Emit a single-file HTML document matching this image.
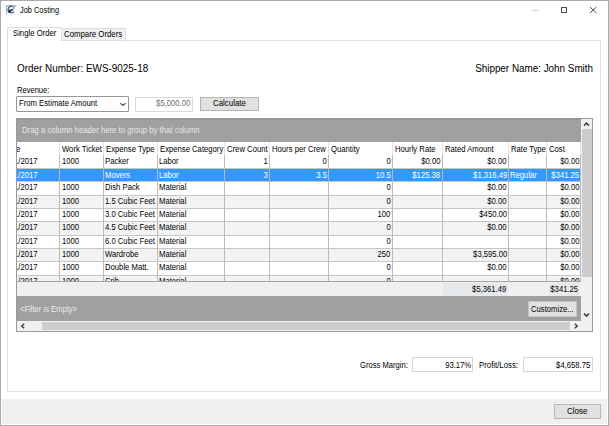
<!DOCTYPE html>
<html><head><meta charset="utf-8"><style>
html,body{margin:0;padding:0;width:609px;height:426px;overflow:hidden;background:#fff;}
body{position:relative;font-family:"Liberation Sans",sans-serif;}
.b{position:absolute;}
.t{position:absolute;white-space:nowrap;line-height:1;}
</style></head><body>
<div class="b" style="left:0px;top:0px;width:609px;height:426px;background:#fff;"></div>
<div class="b" style="left:0px;top:0px;width:609px;height:426px;border:1px solid #ababab;box-sizing:border-box;"></div>
<svg class="b" style="left:3px;top:2px" width="16" height="16" viewBox="3 2 16 16">
<rect x="6.6" y="5.5" width="9.4" height="0.9" fill="#5d739b"/>
<rect x="6.1" y="5.8" width="0.9" height="8.6" fill="#8ea0c0"/>
<path d="M12.6 6.6 A3.2 3.2 0 1 0 13.8 11.6" stroke="#3d5b8c" stroke-width="1.3" fill="none"/>
<path d="M13.2 7.2 L14.4 8.6" stroke="#5b74a0" stroke-width="1.1"/>
<path d="M8.6 11.6 Q10.5 12.6 9.8 10.6 L13.2 9.6" stroke="#0f2c5e" stroke-width="1.6" fill="none"/>
<circle cx="9.6" cy="11.4" r="1.3" fill="#16335f"/>
</svg>
<div class="t" style="left:19.50px;top:6.48px;font-size:8.29px;color:#000;transform:scaleX(0.8929);transform-origin:0 0;">Job Costing</div>
<div class="b" style="left:532px;top:10px;width:7px;height:1px;background:#d4d4d4;"></div>
<div class="b" style="left:560.5px;top:7px;width:6.7999999999999545px;height:6.199999999999999px;border:1px solid #4a4a4a;border-radius:0.6px;box-sizing:border-box;"></div>
<svg class="b" style="left:589px;top:6px" width="9" height="9" viewBox="589 6 9 9">
<path d="M590.1 7.0 L596.3 13.0 M596.3 7.0 L590.1 13.0" stroke="#3a3a3a" stroke-width="0.95"/></svg>
<div class="b" style="left:7px;top:40.4px;width:593.5px;height:352.1px;border:1px solid #e0e0e0;box-sizing:border-box;background:#fff;"></div>
<div class="b" style="left:61px;top:28.2px;width:64.6px;height:12.8px;border:1px solid #dedede;box-sizing:border-box;background:#f0f0f0;"></div>
<div class="b" style="left:7px;top:26.8px;width:54.5px;height:14.7px;border:1px solid #dedede;border-bottom:none;box-sizing:border-box;background:#fff;"></div>
<div class="t" style="left:12.60px;top:28.67px;font-size:8.66px;color:#000;transform:scaleX(0.8929);transform-origin:0 0;">Single Order</div>
<div class="t" style="left:64.00px;top:30.19px;font-size:8.76px;color:#000;transform:scaleX(0.8929);transform-origin:0 0;">Compare Orders</div>
<div class="t" style="left:16.60px;top:62.79px;font-size:11.12px;color:#000;transform:scaleX(0.8929);transform-origin:0 0;">Order Number: EWS-9025-18</div>
<div class="t" style="right:16.20px;top:62.84px;font-size:11.05px;color:#000;transform:scaleX(0.8929);transform-origin:100% 0;">Shipper Name: John Smith</div>
<div class="t" style="left:16.60px;top:85.92px;font-size:8.48px;color:#000;transform:scaleX(0.8929);transform-origin:0 0;">Revenue:</div>
<div class="b" style="left:16.3px;top:96.3px;width:112.7px;height:15.700000000000003px;border:1px solid #969696;border-radius:1px;box-sizing:border-box;background:#fff;"></div>
<div class="t" style="left:18.60px;top:99.00px;font-size:8.62px;color:#000;transform:scaleX(0.8929);transform-origin:0 0;">From Estimate Amount</div>
<svg class="b" style="left:119px;top:101px" width="7" height="5" viewBox="0 0 7 5">
<path d="M1.2 2.1 L3.9 4.5 L6.6 2.1" stroke="#505050" stroke-width="1.25" fill="none"/></svg>
<div class="b" style="left:135px;top:96.5px;width:58px;height:15.5px;border:1px solid #d9d9d9;box-sizing:border-box;background:#fff;"></div>
<div class="t" style="right:418.90px;top:99.10px;font-size:8.62px;color:#6d6d6d;transform:scaleX(0.8929);transform-origin:100% 0;">$5,000.00</div>
<div class="b" style="left:199.5px;top:97px;width:59.80000000000001px;height:14px;border:1px solid #b4b4b4;box-sizing:border-box;background:#e1e1e1;"></div>
<div class="t" style="left:212.80px;top:99.42px;font-size:8.84px;color:#000;transform:scaleX(0.8929);transform-origin:0 0;">Calculate</div>
<div class="b" style="left:16.3px;top:118px;width:576.2px;height:214px;background:#fff;"></div>
<div class="b" style="left:17px;top:118.5px;width:564px;height:23.19999999999999px;background:#a0a0a0;border-top:1px solid #929599;box-sizing:border-box;"></div>
<div class="t" style="left:22.20px;top:125.83px;font-size:8.70px;color:#e8e8e8;transform:scaleX(0.8929);transform-origin:0 0;">Drag a column header here to group by that column</div>
<div class="b" style="left:17px;top:155.2px;width:564px;height:126.10px;overflow:hidden;">
<div class="b" style="left:0;top:0.00px;width:563.5px;height:13.83px;background:#fff;"></div>
<div class="b" style="left:0;top:13.33px;width:563.5px;height:13.83px;background:#3399ff;"></div>
<div class="b" style="left:0;top:26.66px;width:563.5px;height:13.83px;background:#fff;"></div>
<div class="b" style="left:0;top:39.99px;width:563.5px;height:13.83px;background:#f3f3f3;"></div>
<div class="b" style="left:0;top:53.32px;width:563.5px;height:13.83px;background:#fff;"></div>
<div class="b" style="left:0;top:66.65px;width:563.5px;height:13.83px;background:#f3f3f3;"></div>
<div class="b" style="left:0;top:79.98px;width:563.5px;height:13.83px;background:#fff;"></div>
<div class="b" style="left:0;top:93.31px;width:563.5px;height:13.83px;background:#f3f3f3;"></div>
<div class="b" style="left:0;top:106.64px;width:563.5px;height:13.83px;background:#fff;"></div>
<div class="b" style="left:0;top:119.97px;width:563.5px;height:13.83px;background:#f3f3f3;"></div>
<div class="b" style="left:0;top:12.83px;width:563.5px;height:1px;background:#c6c6c6;"></div>
<div class="b" style="left:0;top:26.16px;width:563.5px;height:1px;background:#c6c6c6;"></div>
<div class="b" style="left:0;top:39.49px;width:563.5px;height:1px;background:#c6c6c6;"></div>
<div class="b" style="left:0;top:52.82px;width:563.5px;height:1px;background:#c6c6c6;"></div>
<div class="b" style="left:0;top:66.15px;width:563.5px;height:1px;background:#c6c6c6;"></div>
<div class="b" style="left:0;top:79.48px;width:563.5px;height:1px;background:#c6c6c6;"></div>
<div class="b" style="left:0;top:92.81px;width:563.5px;height:1px;background:#c6c6c6;"></div>
<div class="b" style="left:0;top:106.14px;width:563.5px;height:1px;background:#c6c6c6;"></div>
<div class="b" style="left:0;top:119.47px;width:563.5px;height:1px;background:#c6c6c6;"></div>
<div class="b" style="left:0;top:132.80px;width:563.5px;height:1px;background:#c6c6c6;"></div>
<div class="t" style="right:543.60px;top:1.60px;font-size:8.62px;color:#000;transform:scaleX(0.8929);transform-origin:100% 0;">1/1/2017</div>
<div class="t" style="left:45.00px;top:1.60px;font-size:8.62px;color:#000;transform:scaleX(0.8929);transform-origin:0 0;">1000</div>
<div class="t" style="left:88.10px;top:1.60px;font-size:8.62px;color:#000;transform:scaleX(0.8929);transform-origin:0 0;">Packer</div>
<div class="t" style="left:142.20px;top:1.60px;font-size:8.62px;color:#000;transform:scaleX(0.8929);transform-origin:0 0;">Labor</div>
<div class="t" style="right:313.40px;top:1.60px;font-size:8.62px;color:#000;transform:scaleX(0.8929);transform-origin:100% 0;">1</div>
<div class="t" style="right:254.10px;top:1.60px;font-size:8.62px;color:#000;transform:scaleX(0.8929);transform-origin:100% 0;">0</div>
<div class="t" style="right:190.30px;top:1.60px;font-size:8.62px;color:#000;transform:scaleX(0.8929);transform-origin:100% 0;">0</div>
<div class="t" style="right:140.60px;top:1.60px;font-size:8.62px;color:#000;transform:scaleX(0.8929);transform-origin:100% 0;">$0.00</div>
<div class="t" style="right:74.10px;top:1.60px;font-size:8.62px;color:#000;transform:scaleX(0.8929);transform-origin:100% 0;">$0.00</div>
<div class="t" style="right:1.50px;top:1.60px;font-size:8.62px;color:#000;transform:scaleX(0.8929);transform-origin:100% 0;">$0.00</div>
<div class="t" style="right:543.60px;top:15.63px;font-size:8.62px;color:#fff;transform:scaleX(0.8929);transform-origin:100% 0;">1/1/2017</div>
<div class="t" style="left:88.10px;top:15.63px;font-size:8.62px;color:#fff;transform:scaleX(0.8929);transform-origin:0 0;">Movers</div>
<div class="t" style="left:142.20px;top:15.63px;font-size:8.62px;color:#fff;transform:scaleX(0.8929);transform-origin:0 0;">Labor</div>
<div class="t" style="right:313.40px;top:15.63px;font-size:8.62px;color:#fff;transform:scaleX(0.8929);transform-origin:100% 0;">3</div>
<div class="t" style="right:254.10px;top:15.63px;font-size:8.62px;color:#fff;transform:scaleX(0.8929);transform-origin:100% 0;">3.5</div>
<div class="t" style="right:190.30px;top:15.63px;font-size:8.62px;color:#fff;transform:scaleX(0.8929);transform-origin:100% 0;">10.5</div>
<div class="t" style="right:140.60px;top:15.63px;font-size:8.62px;color:#fff;transform:scaleX(0.8929);transform-origin:100% 0;">$125.38</div>
<div class="t" style="right:74.10px;top:15.63px;font-size:8.62px;color:#fff;transform:scaleX(0.8929);transform-origin:100% 0;">$1,316.49</div>
<div class="t" style="left:492.80px;top:15.63px;font-size:8.62px;color:#fff;transform:scaleX(0.8929);transform-origin:0 0;">Regular</div>
<div class="t" style="right:1.50px;top:15.63px;font-size:8.62px;color:#fff;transform:scaleX(0.8929);transform-origin:100% 0;">$341.25</div>
<div class="t" style="right:543.60px;top:28.26px;font-size:8.62px;color:#000;transform:scaleX(0.8929);transform-origin:100% 0;">1/1/2017</div>
<div class="t" style="left:45.00px;top:28.26px;font-size:8.62px;color:#000;transform:scaleX(0.8929);transform-origin:0 0;">1000</div>
<div class="t" style="left:88.10px;top:28.26px;font-size:8.62px;color:#000;transform:scaleX(0.8929);transform-origin:0 0;">Dish Pack</div>
<div class="t" style="left:142.20px;top:28.26px;font-size:8.62px;color:#000;transform:scaleX(0.8929);transform-origin:0 0;">Material</div>
<div class="t" style="right:190.30px;top:28.26px;font-size:8.62px;color:#000;transform:scaleX(0.8929);transform-origin:100% 0;">0</div>
<div class="t" style="right:74.10px;top:28.26px;font-size:8.62px;color:#000;transform:scaleX(0.8929);transform-origin:100% 0;">$0.00</div>
<div class="t" style="right:1.50px;top:28.26px;font-size:8.62px;color:#000;transform:scaleX(0.8929);transform-origin:100% 0;">$0.00</div>
<div class="t" style="right:543.60px;top:41.59px;font-size:8.62px;color:#000;transform:scaleX(0.8929);transform-origin:100% 0;">1/1/2017</div>
<div class="t" style="left:45.00px;top:41.59px;font-size:8.62px;color:#000;transform:scaleX(0.8929);transform-origin:0 0;">1000</div>
<div class="t" style="left:88.10px;top:41.59px;font-size:8.62px;color:#000;transform:scaleX(0.8929);transform-origin:0 0;">1.5 Cubic Feet</div>
<div class="t" style="left:142.20px;top:41.59px;font-size:8.62px;color:#000;transform:scaleX(0.8929);transform-origin:0 0;">Material</div>
<div class="t" style="right:190.30px;top:41.59px;font-size:8.62px;color:#000;transform:scaleX(0.8929);transform-origin:100% 0;">0</div>
<div class="t" style="right:74.10px;top:41.59px;font-size:8.62px;color:#000;transform:scaleX(0.8929);transform-origin:100% 0;">$0.00</div>
<div class="t" style="right:1.50px;top:41.59px;font-size:8.62px;color:#000;transform:scaleX(0.8929);transform-origin:100% 0;">$0.00</div>
<div class="t" style="right:543.60px;top:54.92px;font-size:8.62px;color:#000;transform:scaleX(0.8929);transform-origin:100% 0;">1/1/2017</div>
<div class="t" style="left:45.00px;top:54.92px;font-size:8.62px;color:#000;transform:scaleX(0.8929);transform-origin:0 0;">1000</div>
<div class="t" style="left:88.10px;top:54.92px;font-size:8.62px;color:#000;transform:scaleX(0.8929);transform-origin:0 0;">3.0 Cubic Feet</div>
<div class="t" style="left:142.20px;top:54.92px;font-size:8.62px;color:#000;transform:scaleX(0.8929);transform-origin:0 0;">Material</div>
<div class="t" style="right:190.30px;top:54.92px;font-size:8.62px;color:#000;transform:scaleX(0.8929);transform-origin:100% 0;">100</div>
<div class="t" style="right:74.10px;top:54.92px;font-size:8.62px;color:#000;transform:scaleX(0.8929);transform-origin:100% 0;">$450.00</div>
<div class="t" style="right:1.50px;top:54.92px;font-size:8.62px;color:#000;transform:scaleX(0.8929);transform-origin:100% 0;">$0.00</div>
<div class="t" style="right:543.60px;top:68.25px;font-size:8.62px;color:#000;transform:scaleX(0.8929);transform-origin:100% 0;">1/1/2017</div>
<div class="t" style="left:45.00px;top:68.25px;font-size:8.62px;color:#000;transform:scaleX(0.8929);transform-origin:0 0;">1000</div>
<div class="t" style="left:88.10px;top:68.25px;font-size:8.62px;color:#000;transform:scaleX(0.8929);transform-origin:0 0;">4.5 Cubic Feet</div>
<div class="t" style="left:142.20px;top:68.25px;font-size:8.62px;color:#000;transform:scaleX(0.8929);transform-origin:0 0;">Material</div>
<div class="t" style="right:190.30px;top:68.25px;font-size:8.62px;color:#000;transform:scaleX(0.8929);transform-origin:100% 0;">0</div>
<div class="t" style="right:74.10px;top:68.25px;font-size:8.62px;color:#000;transform:scaleX(0.8929);transform-origin:100% 0;">$0.00</div>
<div class="t" style="right:1.50px;top:68.25px;font-size:8.62px;color:#000;transform:scaleX(0.8929);transform-origin:100% 0;">$0.00</div>
<div class="t" style="right:543.60px;top:81.58px;font-size:8.62px;color:#000;transform:scaleX(0.8929);transform-origin:100% 0;">1/1/2017</div>
<div class="t" style="left:45.00px;top:81.58px;font-size:8.62px;color:#000;transform:scaleX(0.8929);transform-origin:0 0;">1000</div>
<div class="t" style="left:88.10px;top:81.58px;font-size:8.62px;color:#000;transform:scaleX(0.8929);transform-origin:0 0;">6.0 Cubic Feet</div>
<div class="t" style="left:142.20px;top:81.58px;font-size:8.62px;color:#000;transform:scaleX(0.8929);transform-origin:0 0;">Material</div>
<div class="t" style="right:190.30px;top:81.58px;font-size:8.62px;color:#000;transform:scaleX(0.8929);transform-origin:100% 0;">0</div>
<div class="t" style="right:1.50px;top:81.58px;font-size:8.62px;color:#000;transform:scaleX(0.8929);transform-origin:100% 0;">$0.00</div>
<div class="t" style="right:543.60px;top:94.91px;font-size:8.62px;color:#000;transform:scaleX(0.8929);transform-origin:100% 0;">1/1/2017</div>
<div class="t" style="left:45.00px;top:94.91px;font-size:8.62px;color:#000;transform:scaleX(0.8929);transform-origin:0 0;">1000</div>
<div class="t" style="left:88.10px;top:94.91px;font-size:8.62px;color:#000;transform:scaleX(0.8929);transform-origin:0 0;">Wardrobe</div>
<div class="t" style="left:142.20px;top:94.91px;font-size:8.62px;color:#000;transform:scaleX(0.8929);transform-origin:0 0;">Material</div>
<div class="t" style="right:190.30px;top:94.91px;font-size:8.62px;color:#000;transform:scaleX(0.8929);transform-origin:100% 0;">250</div>
<div class="t" style="right:74.10px;top:94.91px;font-size:8.62px;color:#000;transform:scaleX(0.8929);transform-origin:100% 0;">$3,595.00</div>
<div class="t" style="right:1.50px;top:94.91px;font-size:8.62px;color:#000;transform:scaleX(0.8929);transform-origin:100% 0;">$0.00</div>
<div class="t" style="right:543.60px;top:108.24px;font-size:8.62px;color:#000;transform:scaleX(0.8929);transform-origin:100% 0;">1/1/2017</div>
<div class="t" style="left:45.00px;top:108.24px;font-size:8.62px;color:#000;transform:scaleX(0.8929);transform-origin:0 0;">1000</div>
<div class="t" style="left:88.10px;top:108.24px;font-size:8.62px;color:#000;transform:scaleX(0.8929);transform-origin:0 0;">Double Matt.</div>
<div class="t" style="left:142.20px;top:108.24px;font-size:8.62px;color:#000;transform:scaleX(0.8929);transform-origin:0 0;">Material</div>
<div class="t" style="right:190.30px;top:108.24px;font-size:8.62px;color:#000;transform:scaleX(0.8929);transform-origin:100% 0;">0</div>
<div class="t" style="right:74.10px;top:108.24px;font-size:8.62px;color:#000;transform:scaleX(0.8929);transform-origin:100% 0;">$0.00</div>
<div class="t" style="right:1.50px;top:108.24px;font-size:8.62px;color:#000;transform:scaleX(0.8929);transform-origin:100% 0;">$0.00</div>
<div class="t" style="right:543.60px;top:121.57px;font-size:8.62px;color:#000;transform:scaleX(0.8929);transform-origin:100% 0;">1/1/2017</div>
<div class="t" style="left:45.00px;top:121.57px;font-size:8.62px;color:#000;transform:scaleX(0.8929);transform-origin:0 0;">1000</div>
<div class="t" style="left:88.10px;top:121.57px;font-size:8.62px;color:#000;transform:scaleX(0.8929);transform-origin:0 0;">Crib</div>
<div class="t" style="left:142.20px;top:121.57px;font-size:8.62px;color:#000;transform:scaleX(0.8929);transform-origin:0 0;">Material</div>
<div class="t" style="right:190.30px;top:121.57px;font-size:8.62px;color:#000;transform:scaleX(0.8929);transform-origin:100% 0;">0</div>
<div class="t" style="right:1.50px;top:121.57px;font-size:8.62px;color:#000;transform:scaleX(0.8929);transform-origin:100% 0;">$0.00</div>
<div class="b" style="left:42.00px;top:0;width:1px;height:126.10px;background:#bababa;"></div>
<div class="b" style="left:85.90px;top:0;width:1px;height:126.10px;background:#bababa;"></div>
<div class="b" style="left:140.00px;top:0;width:1px;height:126.10px;background:#bababa;"></div>
<div class="b" style="left:207.10px;top:0;width:1px;height:126.10px;background:#bababa;"></div>
<div class="b" style="left:251.70px;top:0;width:1px;height:126.10px;background:#bababa;"></div>
<div class="b" style="left:311.00px;top:0;width:1px;height:126.10px;background:#bababa;"></div>
<div class="b" style="left:374.80px;top:0;width:1px;height:126.10px;background:#bababa;"></div>
<div class="b" style="left:424.50px;top:0;width:1px;height:126.10px;background:#bababa;"></div>
<div class="b" style="left:491.00px;top:0;width:1px;height:126.10px;background:#bababa;"></div>
<div class="b" style="left:528.90px;top:0;width:1px;height:126.10px;background:#bababa;"></div>
<div class="b" style="left:563.00px;top:0;width:1px;height:126.10px;background:#bababa;"></div>
</div>
<div class="b" style="left:17px;top:141.7px;width:564px;height:13.50px;overflow:hidden;background:#fff">
<div class="t" style="right:561.20px;top:2.90px;font-size:8.62px;color:#000;transform:scaleX(0.8929);transform-origin:100% 0;">Date</div>
<div class="t" style="left:45.00px;top:2.90px;font-size:8.62px;color:#000;transform:scaleX(0.8929);transform-origin:0 0;">Work Ticket</div>
<div class="t" style="left:88.90px;top:2.90px;font-size:8.62px;color:#000;transform:scaleX(0.8929);transform-origin:0 0;">Expense Type</div>
<div class="t" style="left:143.00px;top:2.90px;font-size:8.62px;color:#000;transform:scaleX(0.8929);transform-origin:0 0;">Expense Category</div>
<div class="t" style="left:210.10px;top:2.90px;font-size:8.62px;color:#000;transform:scaleX(0.8929);transform-origin:0 0;">Crew Count</div>
<div class="t" style="left:254.70px;top:2.90px;font-size:8.62px;color:#000;transform:scaleX(0.8929);transform-origin:0 0;">Hours per Crew</div>
<div class="t" style="left:314.00px;top:2.90px;font-size:8.62px;color:#000;transform:scaleX(0.8929);transform-origin:0 0;">Quantity</div>
<div class="t" style="left:377.80px;top:2.90px;font-size:8.62px;color:#000;transform:scaleX(0.8929);transform-origin:0 0;">Hourly Rate</div>
<div class="t" style="left:427.50px;top:2.90px;font-size:8.62px;color:#000;transform:scaleX(0.8929);transform-origin:0 0;">Rated Amount</div>
<div class="t" style="left:494.00px;top:2.90px;font-size:8.62px;color:#000;transform:scaleX(0.8929);transform-origin:0 0;">Rate Type</div>
<div class="t" style="left:531.90px;top:2.90px;font-size:8.62px;color:#000;transform:scaleX(0.8929);transform-origin:0 0;">Cost</div>
<div class="b" style="left:42.00px;top:0;width:1px;height:13.50px;background:#e3e3e3;"></div>
<div class="b" style="left:85.90px;top:0;width:1px;height:13.50px;background:#e3e3e3;"></div>
<div class="b" style="left:140.00px;top:0;width:1px;height:13.50px;background:#e3e3e3;"></div>
<div class="b" style="left:207.10px;top:0;width:1px;height:13.50px;background:#e3e3e3;"></div>
<div class="b" style="left:251.70px;top:0;width:1px;height:13.50px;background:#e3e3e3;"></div>
<div class="b" style="left:311.00px;top:0;width:1px;height:13.50px;background:#e3e3e3;"></div>
<div class="b" style="left:374.80px;top:0;width:1px;height:13.50px;background:#e3e3e3;"></div>
<div class="b" style="left:424.50px;top:0;width:1px;height:13.50px;background:#e3e3e3;"></div>
<div class="b" style="left:491.00px;top:0;width:1px;height:13.50px;background:#e3e3e3;"></div>
<div class="b" style="left:528.90px;top:0;width:1px;height:13.50px;background:#e3e3e3;"></div>
<div class="b" style="left:563.00px;top:0;width:1px;height:13.50px;background:#e3e3e3;"></div>
</div>
<div class="b" style="left:17px;top:281px;width:564px;height:15.600000000000023px;background:#f0f0f0;border-top:1px solid #a4a4a4;box-sizing:border-box;"></div>
<div class="b" style="left:443.3px;top:282.8px;width:64.39999999999998px;height:12.800000000000011px;background:#e6e9ec;"></div>
<div class="b" style="left:547.6px;top:282.8px;width:32.39999999999998px;height:12.800000000000011px;background:#e9e9e9;"></div>
<div class="t" style="right:103.20px;top:284.90px;font-size:8.62px;color:#000;transform:scaleX(0.8929);transform-origin:100% 0;">$5,361.49</div>
<div class="t" style="right:30.70px;top:284.90px;font-size:8.62px;color:#000;transform:scaleX(0.8929);transform-origin:100% 0;">$341.25</div>
<div class="b" style="left:17px;top:296.4px;width:564px;height:24.200000000000045px;background:#a0a0a0;"></div>
<div class="t" style="left:20.40px;top:304.98px;font-size:8.53px;color:#eaeaea;transform:scaleX(0.8929);transform-origin:0 0;">&lt;Filter is Empty&gt;</div>
<div class="b" style="left:527.7px;top:301.2px;width:49.799999999999955px;height:15.600000000000023px;background:#e1e1e1;border:1px solid #c4c4c4;box-sizing:border-box;"></div>
<div class="t" style="left:531.40px;top:304.50px;font-size:8.62px;color:#000;transform:scaleX(0.8929);transform-origin:0 0;">Customize...</div>
<div class="b" style="left:17px;top:320.5px;width:564px;height:11.0px;background:#f0f0f0;"></div>
<div class="b" style="left:42px;top:322px;width:528px;height:8px;background:#cdcdcd;"></div>
<svg class="b" style="left:20px;top:323px" width="6" height="6" viewBox="0 0 6 6"><path d="M4.2 0.8 L1.8 3 L4.2 5.2" stroke="#404040" stroke-width="1.5" fill="none"/></svg>
<svg class="b" style="left:573px;top:323px" width="6" height="6" viewBox="0 0 6 6"><path d="M1.8 0.8 L4.2 3 L1.8 5.2" stroke="#404040" stroke-width="1.5" fill="none"/></svg>
<div class="b" style="left:581px;top:118.5px;width:11px;height:202.0px;background:#f0f0f0;"></div>
<div class="b" style="left:582px;top:129px;width:9.5px;height:148px;background:#cdcdcd;"></div>
<svg class="b" style="left:583px;top:121px" width="7" height="6" viewBox="0 0 7 6"><path d="M1 4.6 L3.5 2.1 L6 4.6" stroke="#404040" stroke-width="1.5" fill="none"/></svg>
<svg class="b" style="left:583px;top:312px" width="7" height="6" viewBox="0 0 7 6"><path d="M1 1.6 L3.5 4.1 L6 1.6" stroke="#404040" stroke-width="1.5" fill="none"/></svg>
<div class="b" style="left:581px;top:320.5px;width:11px;height:11.0px;background:#f0f0f0;"></div>
<div class="b" style="left:16px;top:118px;width:577px;height:214px;border:1px solid #9a9a9a;box-sizing:border-box;"></div>
<div class="t" style="left:360.20px;top:360.79px;font-size:8.52px;color:#000;transform:scaleX(0.8929);transform-origin:0 0;">Gross Margin:</div>
<div class="b" style="left:412.3px;top:357.4px;width:61.19999999999999px;height:14.600000000000023px;border:1px solid #d6d6d6;box-sizing:border-box;background:#fff;"></div>
<div class="t" style="right:138.00px;top:360.50px;font-size:8.62px;color:#000;transform:scaleX(0.8929);transform-origin:100% 0;">93.17%</div>
<div class="t" style="left:479.00px;top:360.60px;font-size:8.74px;color:#000;transform:scaleX(0.8929);transform-origin:0 0;">Profit/Loss:</div>
<div class="b" style="left:522.9px;top:357.4px;width:70.10000000000002px;height:14.600000000000023px;border:1px solid #d6d6d6;box-sizing:border-box;background:#fff;"></div>
<div class="t" style="right:18.40px;top:360.50px;font-size:8.62px;color:#000;transform:scaleX(0.8929);transform-origin:100% 0;">$4,658.75</div>
<div class="b" style="left:2px;top:399px;width:604.5px;height:25px;background:#f0f0f0;"></div>
<div class="b" style="left:554.2px;top:404px;width:46.799999999999955px;height:14.600000000000023px;background:#e1e1e1;border:1px solid #b8b8b8;box-sizing:border-box;"></div>
<div class="t" style="left:567.20px;top:407.46px;font-size:9.03px;color:#000;transform:scaleX(0.8929);transform-origin:0 0;">Close</div>
</body></html>
